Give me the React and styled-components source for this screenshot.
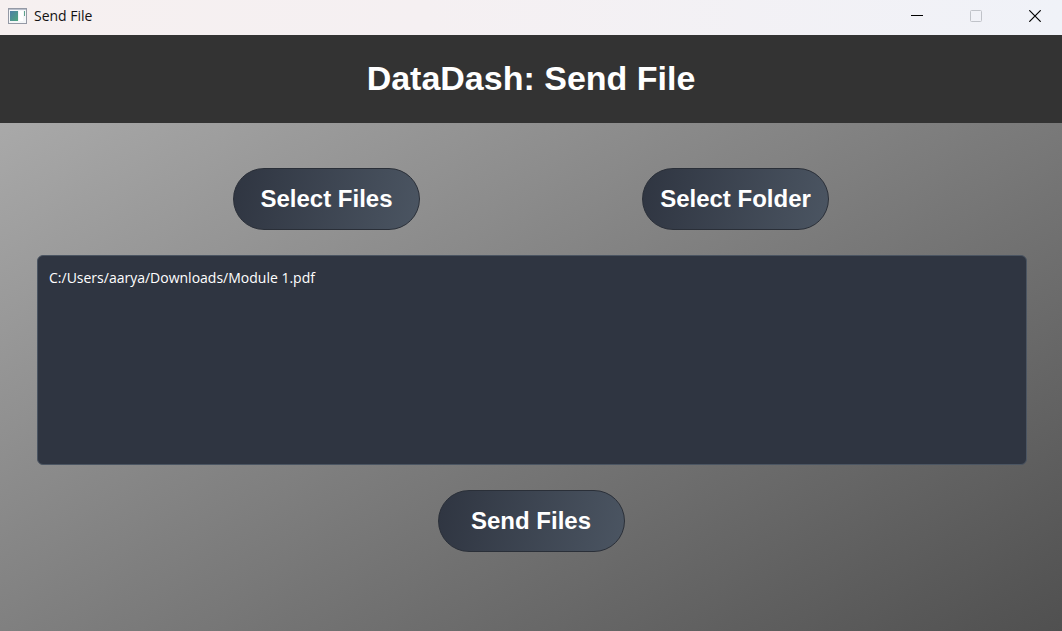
import React, { useState } from "react";
import styled, { createGlobalStyle } from "styled-components";

const GlobalStyle = createGlobalStyle`
  *, *::before, *::after { box-sizing: border-box; }
  body { margin: 0; background: #333333; }
`;

const Window = styled.div`
  display: flex;
  flex-direction: column;
  min-height: 100vh;
  font-family: "Segoe UI", "Open Sans", sans-serif;
`;

const TitleBar = styled.div`
  display: flex;
  align-items: center;
  justify-content: space-between;
  height: 35px;
  padding-left: 8px;
  background: linear-gradient(90deg, #f6f0f0, #f5f0f2 40%, #f0f2f8);
`;

const Caption = styled.div`
  display: flex;
  align-items: center;
  gap: 7px;
  height: 32px;
  align-self: flex-start;
  font-size: 14px;
  line-height: 20px;
  color: #111111;
`;

const WindowControls = styled.div`
  display: flex;
  align-self: flex-start;
  gap: 5px;
`;

const ControlButton = styled.button`
  display: grid;
  place-items: center;
  width: 54px;
  height: 32px;
  margin: 0;
  padding: 0;
  border: 0;
  background: transparent;
  color: #000000;

  &:disabled { color: #c0c3c9; }
`;

const Client = styled.main`
  flex: 1;
  display: flex;
  flex-direction: column;
  background: linear-gradient(to bottom right, #b0b0b0, #505050);
`;

const Header = styled.header`
  display: flex;
  align-items: center;
  justify-content: center;
  height: 88px;
  padding-bottom: 2px;
  background: #333333;
`;

const Heading = styled.h1`
  margin: 0;
  font: bold 34px/40px "Liberation Sans", Arial, sans-serif;
  color: #ffffff;
`;

const Content = styled.section`
  display: flex;
  flex-direction: column;
  gap: 25px;
  padding: 45px 35px 40px 37px;
`;

const ButtonRow = styled.div`
  display: flex;
  justify-content: space-evenly;
  gap: 26px;
  padding-right: 2px;
`;

const PillButton = styled.button`
  width: 187px;
  height: 62px;
  padding: 0;
  border: 1px solid #2a2f38;
  border-radius: 31px;
  background: linear-gradient(100deg, #2f3541, #4b5562) border-box;
  font: bold 24px/28px "Liberation Sans", Arial, sans-serif;
  color: #ffffff;
`;

const FileList = styled.textarea`
  display: block;
  width: 100%;
  height: 210px;
  padding: 11px;
  border: 1px solid #4b5562;
  border-radius: 6px;
  outline: 0;
  resize: none;
  background: #2f3541;
  font: 14px/22px "Segoe UI", "Open Sans", sans-serif;
  color: #ffffff;
`;

function AppIcon() {
  return (
    <svg width="19" height="16" viewBox="0 0 19 16" aria-hidden="true">
      <defs>
        <linearGradient id="pane" x1="0" y1="0" x2="1" y2="1">
          <stop offset="0" stopColor="#4d7fa8" />
          <stop offset="1" stopColor="#4fa67c" />
        </linearGradient>
      </defs>
      <rect x="0.5" y="0.5" width="18" height="15" fill="#f4f6f8" stroke="#9499a5" />
      <rect x="1" y="1" width="17" height="1" fill="#b9bfcb" />
      <rect x="2" y="3" width="8" height="10" fill="url(#pane)" />
      <rect x="11" y="3" width="4" height="10" fill="#ffffff" />
      <rect x="16" y="3" width="1" height="5" fill="#5fa38c" />
    </svg>
  );
}

export default function App() {
  const [files, setFiles] = useState("C:/Users/aarya/Downloads/Module 1.pdf");

  return (
    <Window>
      <GlobalStyle />
      <TitleBar>
        <Caption>
          <AppIcon />
          <span>Send File</span>
        </Caption>
        <WindowControls>
          <ControlButton type="button" aria-label="Minimize">
            <svg width="12" height="12" viewBox="0 0 12 12">
              <path d="M0 5.5H12" stroke="currentColor" />
            </svg>
          </ControlButton>
          <ControlButton type="button" aria-label="Maximize" disabled>
            <svg width="12" height="12" viewBox="0 0 12 12">
              <rect x="0.5" y="0.5" width="11" height="11" rx="1" fill="none" stroke="currentColor" />
            </svg>
          </ControlButton>
          <ControlButton type="button" aria-label="Close">
            <svg width="12" height="12" viewBox="0 0 12 12">
              <path d="M0.3 0.3L11.7 11.7M11.7 0.3L0.3 11.7" stroke="currentColor" strokeWidth="1.2" />
            </svg>
          </ControlButton>
        </WindowControls>
      </TitleBar>
      <Client>
        <Header>
          <Heading>DataDash: Send File</Heading>
        </Header>
        <Content>
          <ButtonRow>
            <PillButton type="button">Select Files</PillButton>
            <PillButton type="button">Select Folder</PillButton>
          </ButtonRow>
          <FileList
            aria-label="Selected files"
            spellCheck={false}
            value={files}
            onChange={(e) => setFiles(e.target.value)}
          />
          <ButtonRow>
            <PillButton type="button">Send Files</PillButton>
          </ButtonRow>
        </Content>
      </Client>
    </Window>
  );
}
